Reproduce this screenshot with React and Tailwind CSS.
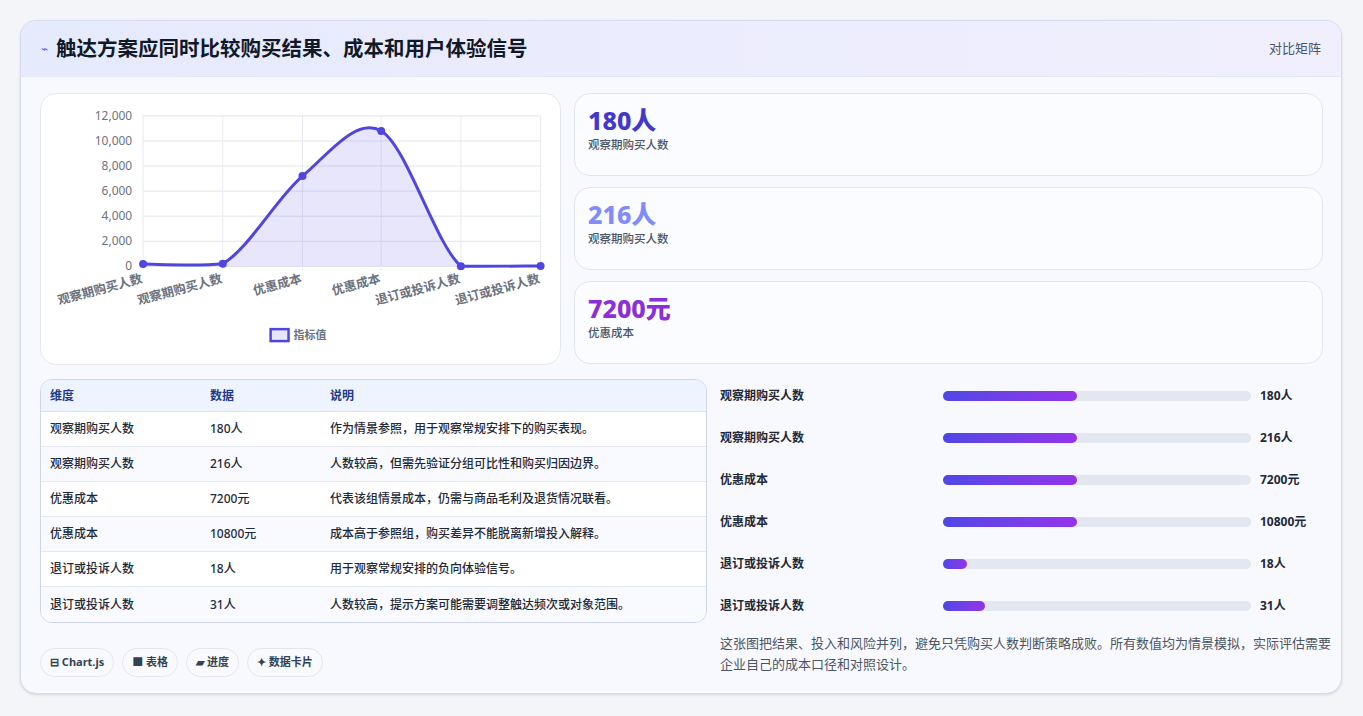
const F = { fontFamily: '"Noto Sans", "Noto Sans CJK SC", sans-serif' };

const pts = [
  [142, 180], [222, 216], [302, 7200], [381, 10800], [461, 18], [541, 31],
].map(([x, v]) => [x, 266 - (v / 12000) * 151]);

function curve(p) {
  let d = `M${p[0][0]},${p[0][1]}`;
  for (let i = 0; i < p.length - 1; i++) {
    const p0 = p[i - 1] || p[i], p1 = p[i], p2 = p[i + 1], p3 = p[i + 2] || p2;
    const t = 0.16;
    const c1 = [p1[0] + (p2[0] - p0[0]) * t, p1[1] + (p2[1] - p0[1]) * t];
    const c2 = [p2[0] - (p3[0] - p1[0]) * t, p2[1] - (p3[1] - p1[1]) * t];
    d += ` C${c1[0]},${Math.min(c1[1], 266)} ${c2[0]},${Math.min(c2[1], 266)} ${p2[0]},${p2[1]}`;
  }
  return d;
}

const labels = ["观察期购买人数", "观察期购买人数", "优惠成本", "优惠成本", "退订或投诉人数", "退订或投诉人数"];

function Chart() {
  const line = curve(pts);
  return (
    <svg viewBox="40 93 520 271" className="w-full h-full">
      {[0, 1, 2, 3, 4, 5, 6].map((i) => {
        const y = 266 - i * 25.17;
        return (
          <g key={i}>
            <line x1="142" x2="541" y1={y} y2={y} stroke="#e2e5ef" />
            <text x="131" y={y + 4} textAnchor="end" fontSize="12" fill="#6b7280" style={F}>
              {(i * 2000).toLocaleString("en-US")}
            </text>
          </g>
        );
      })}
      {pts.map(([x], i) => (
        <line key={i} x1={x} x2={x} y1="115" y2="270" stroke="#e8eaf3" />
      ))}
      <path d={`${line} L541,266 L142,266 Z`} fill="rgba(99,88,230,0.15)" />
      <path d={line} fill="none" stroke="#5145e0" strokeWidth="3" />
      {pts.map(([x, y], i) => (
        <circle key={i} cx={x} cy={y} r="4" fill="#5145e0" />
      ))}
      {pts.map(([x], i) => (
        <text key={i} x={x} y="282" textAnchor="end" fontSize="12.5" fontWeight="600" fill="#6b7280"
          transform={`rotate(-15 ${x} 282)`} style={F}>{labels[i]}</text>
      ))}
      <rect x="270" y="329" width="18" height="12" fill="rgba(99,88,230,0.15)" stroke="#5145e0" strokeWidth="2.5" />
      <text x="293" y="339" fontSize="11" fontWeight="600" fill="#6b7280" style={F}>指标值</text>
    </svg>
  );
}

const rows = [
  ["观察期购买人数", "180人", "作为情景参照，用于观察常规安排下的购买表现。"],
  ["观察期购买人数", "216人", "人数较高，但需先验证分组可比性和购买归因边界。"],
  ["优惠成本", "7200元", "代表该组情景成本，仍需与商品毛利及退货情况联看。"],
  ["优惠成本", "10800元", "成本高于参照组，购买差异不能脱离新增投入解释。"],
  ["退订或投诉人数", "18人", "用于观察常规安排的负向体验信号。"],
  ["退订或投诉人数", "31人", "人数较高，提示方案可能需要调整触达频次或对象范围。"],
];
const bars = [
  ["观察期购买人数", "180人", 134], ["观察期购买人数", "216人", 134], ["优惠成本", "7200元", 134],
  ["优惠成本", "10800元", 134], ["退订或投诉人数", "18人", 24], ["退订或投诉人数", "31人", 42],
];

export default function App() {
  return (
    <div className="w-[1363px] h-[716px] bg-[#f4f5f9] pt-5 pl-5" style={F}>
      <div className="w-[1322px] h-[674px] rounded-2xl border border-[#d6dbf0] bg-[#f8f9fe] overflow-hidden shadow-sm">
        <div className="h-[56px] flex items-center justify-between px-5 bg-gradient-to-r from-[#e6eafd] to-[#f1effd] border-b border-[#e3e6f5]">
          <div className="flex items-center gap-2">
            <span className="text-[#4f6ef0] text-xs">⌁</span>
            <h1 className="text-[20.5px] font-bold text-[#111827]">触达方案应同时比较购买结果、成本和用户体验信号</h1>
          </div>
          <span className="text-[13px] text-[#4b5563]">对比矩阵</span>
        </div>
        <div className="pl-[19px] pr-[18px] pt-4">
          <div className="flex gap-[13px]">
            <div className="w-[521px] h-[272px] bg-white rounded-2xl border border-[#e5e8f3]"><Chart /></div>
            <div className="flex-1 flex flex-col gap-[11px]">
              {[["180人", "text-[#4338ca]"], ["216人", "text-[#818cf8]"], ["7200元", "text-[#8b2fd9]"]].map(([v, c], i) => (
                <div key={i} className="h-[83px] rounded-2xl border border-[#e1e5f3] bg-[#fbfcff] px-[13px] pt-[10px]">
                  <div className={`text-[25px] font-extrabold leading-[32px] ${c}`}>{v}</div>
                  <div className="text-[11.5px] font-medium text-[#4b5563]">{i === 2 ? "优惠成本" : "观察期购买人数"}</div>
                </div>
              ))}
            </div>
          </div>
          <div className="flex gap-[13px] mt-[14px]">
            <div className="w-[667px]">
              <div className="rounded-xl border border-[#cfd6ea] overflow-hidden bg-white">
                <div className="flex h-[32px] items-center bg-[#eef4ff] border-b border-[#d9e0f0] text-[12px] font-bold text-[#1e3a8a]">
                  <span className="w-[169px] pl-[9px]">维度</span><span className="w-[120px]">数据</span><span>说明</span>
                </div>
                {rows.map((r, i) => (
                  <div key={i} className={`flex h-[35px] items-center text-[12px] font-medium text-[#1f2937] ${i < 5 ? "border-b border-[#e5e8f0]" : ""} ${i % 2 ? "bg-[#f8faff]" : "bg-white"}`}>
                    <span className="w-[169px] pl-[9px]">{r[0]}</span><span className="w-[120px]">{r[1]}</span><span>{r[2]}</span>
                  </div>
                ))}
              </div>
              <div className="flex gap-2 mt-[25px]">
                {["⊟ Chart.js", "■ 表格", "▰ 进度", "✦ 数据卡片"].map((t) => (
                  <span key={t} className="h-[29px] px-[9px] flex items-center rounded-full border border-[#e1e5f0] bg-[#f9fafd] text-[11px] font-bold text-[#374151]">{t}</span>
                ))}
              </div>
            </div>
            <div className="flex-1 -mt-1">
              {bars.map(([l, v, w], i) => (
                <div key={i} className="flex items-center h-[42px]">
                  <span className="w-[223px] text-[12px] font-semibold text-[#1f2937]">{l}</span>
                  <div className="w-[308px] h-[10px] rounded-full bg-[#e2e7f0]">
                    <div className="h-full rounded-full bg-gradient-to-r from-[#4f46e5] to-[#9333ea]" style={{ width: w }} />
                  </div>
                  <span className="ml-[9px] text-[12px] font-bold text-[#1f2937]">{v}</span>
                </div>
              ))}
              <p className="mt-[6px] text-[13px] leading-[21px] text-[#4b5563] -mr-2">这张图把结果、投入和风险并列，避免只凭购买人数判断策略成败。所有数值均为情景模拟，实际评估需要企业自己的成本口径和对照设计。</p>
            </div>
          </div>
        </div>
      </div>
    </div>
  );
}
